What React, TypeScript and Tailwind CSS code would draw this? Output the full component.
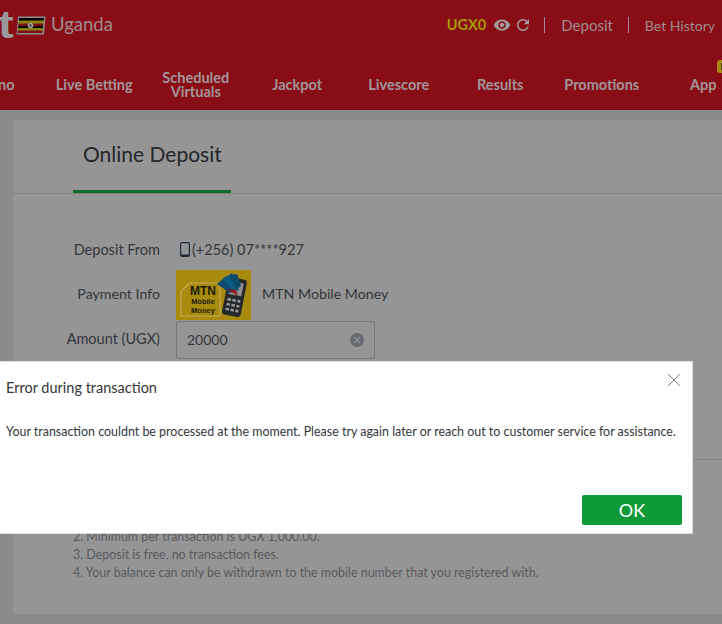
import { X } from "lucide-react";
import { MdRefresh, MdRemoveRedEye } from "react-icons/md";

const navItems = ["Casino", "Live Betting", "Scheduled Virtuals", "Jackpot", "Livescore", "Results", "Promotions"];

const notes = [
  "2. Minimum per transaction is UGX 1,000.00.",
  "3. Deposit is free, no transaction fees.",
  "4. Your balance can only be withdrawn to the mobile number that you registered with.",
];

function UgandaFlag() {
  return (
    <svg width="30" height="19" viewBox="0 0 30 19" className="shrink-0">
      <polygon points="2,0.5 29.5,0.5 28,18.5 0.5,18.5" fill="#8d8d8d" />
      <polygon points="3,2 28,2 27.7,4.7 2.8,4.7" fill="#000" />
      <polygon points="2.8,4.7 27.7,4.7 27.4,7.4 2.5,7.4" fill="#8f8200" />
      <polygon points="2.5,7.4 27.4,7.4 27.1,10 2.3,10" fill="#7c0d12" />
      <polygon points="2.3,10 27.1,10 26.9,12.3 2,12.3" fill="#000" />
      <polygon points="2,12.3 26.9,12.3 26.7,14.6 1.8,14.6" fill="#8f8200" />
      <polygon points="1.8,14.6 26.7,14.6 26.5,17 1.6,17" fill="#7c0d12" />
      <circle cx="14.5" cy="9.5" r="2.8" fill="#a5a5a5" />
      <circle cx="14.5" cy="9.5" r="1.2" fill="#444" />
    </svg>
  );
}

function PhoneIcon() {
  return (
    <svg width="10" height="15" viewBox="0 0 10 15" className="shrink-0">
      <rect x="0.6" y="0.6" width="8.8" height="13.8" rx="1.5" fill="none" stroke="#1e2a3c" strokeWidth="1.2" />
      <rect x="1" y="12.5" width="8" height="1.5" fill="#1e2a3c" />
    </svg>
  );
}

function MtnLogo() {
  return (
    <div className="relative h-[50px] w-[75px] shrink-0 bg-[#a88a0c]">
      <svg width="75" height="50" viewBox="0 0 75 50" className="absolute inset-0">
        <path d="M14 13 L44 13 L44 46 L5 46 L5 21 Z" fill="none" stroke="#c4ad5c" strokeWidth="1.2" />
        <g transform="rotate(11 58 27)">
          <rect x="49" y="8" width="19" height="38" rx="3" fill="#26292b" />
          <rect x="52" y="12" width="13" height="13" fill="#8f8f8f" />
          <rect x="52" y="29" width="3.5" height="2.5" fill="#9a9a9a" />
          <rect x="57" y="29" width="3.5" height="2.5" fill="#9a9a9a" />
          <rect x="62" y="29" width="3" height="2.5" fill="#9a9a9a" />
          <rect x="52" y="34" width="3.5" height="2.5" fill="#9a9a9a" />
          <rect x="57" y="34" width="3.5" height="2.5" fill="#9a9a9a" />
          <rect x="62" y="34" width="3" height="2.5" fill="#9a9a9a" />
          <rect x="52" y="39" width="3.5" height="2.5" fill="#9a9a9a" />
          <rect x="57" y="39" width="3.5" height="2.5" fill="#9a9a9a" />
          <rect x="62" y="39" width="3" height="2.5" fill="#9a9a9a" />
        </g>
        <path d="M41 14 L50 6 L59 21 L54 23 Z" fill="#0d4a6c" />
        <path d="M47 9 L56 3 L63 20 L57 22 Z" fill="#0f5a80" />
        <path d="M53 5 L61 4 L65 16 L60 20 Z" fill="#0d4a6c" />
        <path d="M51 19 L60 20 L62 26 Z" fill="#8f1d1d" />
      </svg>
      <div className="absolute left-[13px] top-[15px] flex w-[28px] flex-col items-center font-['Liberation_Sans',sans-serif] font-bold leading-none text-[#1d1a08]">
        <span className="text-[12px]">MTN</span>
        <span className="mt-[1px] text-[7.5px]">Mobile</span>
        <span className="mt-[1px] text-[7.5px]">Money</span>
      </div>
    </div>
  );
}

export default function App() {
  return (
    <div className="relative h-[624px] w-[722px] overflow-hidden bg-[#8a8b8c] font-['Lato',sans-serif]">
      <header className="h-[110px] bg-[#880d17]">
        <div className="flex h-[50px] items-center">
          <span className="ml-[-2px] w-[18px] shrink-0 origin-left scale-x-125 font-['Liberation_Sans',sans-serif] text-[38px] font-bold leading-none text-[#9a9a9a]">t</span>
          <UgandaFlag />
          <span className="ml-[5px] text-[18.5px] text-[#a08b90]">Uganda</span>
          <div className="ml-auto flex shrink-0 items-center whitespace-nowrap pr-[7px] text-[14px] text-[#a08b90]">
            <span className="text-[14.5px] font-bold text-[#a89a00]">UGX0</span>
            <MdRemoveRedEye size={18} className="ml-[7px] text-[#a39c9c]" />
            <MdRefresh size={18} className="ml-[3px] text-[#a39c9c]" />
            <span className="ml-[12px] h-[16px] w-px bg-[#a08b90]" />
            <span className="ml-[16px] text-[15px]">Deposit</span>
            <span className="ml-[15px] h-[16px] w-px bg-[#a08b90]" />
            <span className="ml-[16px]">Bet History</span>
          </div>
        </div>
        <nav className="flex h-[60px] items-center whitespace-nowrap pt-[10px] text-[14.5px] font-bold leading-[14px] text-[#a39599]">
          <div className="ml-[-58px] flex shrink-0 items-center">
            {navItems.map((item) => (
              <div key={item} className="w-[101.5px] shrink-0 text-center">
                <span className={item === "Scheduled Virtuals" ? "inline-block w-[72px] whitespace-normal" : ""}>
                  {item}
                </span>
              </div>
            ))}
            <div className="relative w-[101.5px] shrink-0 text-center">
              <span>App</span>
              <span className="absolute left-[64px] top-[-18px] flex h-[13px] w-[16px] items-center justify-center rounded-[3px] bg-[#a88a0c]">
                <span className="h-[7px] w-[8px] bg-[#4a3a10]" />
              </span>
            </div>
          </div>
        </nav>
      </header>

      <main className="pl-[13px] pt-[10px]">
        <section className="h-[494px] w-[709px] bg-[#959595]">
          <div className="flex h-[74px] items-start border-b border-[#838383] pl-[60px]">
            <div className="h-[73px] w-[158px] border-b-[3px] border-[#0f6a2d] pl-[10px] pt-[20px] text-[21px] leading-[28px] text-[#23262b]">
              Online Deposit
            </div>
          </div>

          <div className="mt-[39px] flex flex-col text-[14.2px] text-[#33363b]">
            <div className="flex h-[32px] items-center">
              <span className="mt-[1px] w-[147px] text-right text-[14.5px]">Deposit From</span>
              <span className="ml-[20px]"><PhoneIcon /></span>
              <span className="mt-[1px] ml-[2px] text-[14.5px]">(+256) 07****927</span>
            </div>
            <div className="mt-[5px] flex h-[50px] items-center">
              <span className="mb-[2px] w-[147px] text-right">Payment Info</span>
              <div className="ml-[16px]"><MtnLogo /></div>
              <span className="mb-[2px] ml-[11px]">MTN Mobile Money</span>
            </div>
            <div className="mt-px flex h-[38px] items-center">
              <span className="mb-[2px] w-[147px] text-right text-[14.5px]">Amount (UGX)</span>
              <div className="ml-[16px] flex h-[38px] w-[199px] items-center justify-between rounded-[2px] border border-[#7a7a7a] pl-[10px] pr-[10px]">
                <span className="mb-[2px] text-[14px]">20000</span>
                <span className="flex h-[14px] w-[14px] items-center justify-center rounded-full bg-[#666a70]">
                  <X size={10} strokeWidth={3} className="text-[#959595]" />
                </span>
              </div>
            </div>
          </div>

          <div className="mt-[100px] border-b border-[#838383]" />

          <div className="mt-[68px] pl-[60px] text-[12.45px] leading-[18px] text-[#595a5e]">
            {notes.map((note) => (
              <p key={note}>{note}</p>
            ))}
          </div>
        </section>
      </main>

      {/* dialog sits over the page, bleeding off the left edge */}
      <div className="absolute left-[-20px] top-[361px] flex h-[173px] w-[713px] flex-col border border-[#dddddd] bg-white pl-[25px] pr-[10px] text-[#33363b]">
        <div className="mt-[16px] flex items-start justify-between">
          <h2 className="text-[14.5px] leading-[20px]">Error during transaction</h2>
          <X size={22} strokeWidth={0.85} className="mt-[-9px] mr-[-3px] text-[#555]" />
        </div>
        <p className="mt-[25px] whitespace-nowrap text-[12.45px] leading-[18px]">
          Your transaction couldnt be processed at the moment. Please try again later or reach out to customer service for assistance.
        </p>
        <button className="ml-auto mt-[54px] h-[30px] w-[100px] rounded-[2px] bg-[#0f9a3a] text-[18px] text-white">OK</button>
      </div>
    </div>
  );
}
